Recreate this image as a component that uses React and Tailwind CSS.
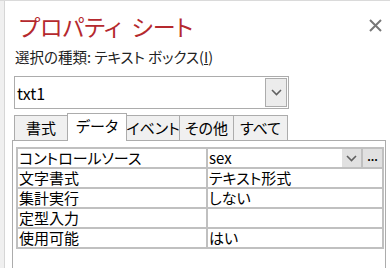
import React from 'react';

const jp = "font-['Noto_Sans_CJK_JP',sans-serif] [font-feature-settings:'palt']";

function Chevron({ className }) {
    return (
        <svg width="11" height="7" viewBox="0 0 11 7" className={className}>
            <path d="M1 1 L5.5 5.5 L10 1" fill="none" stroke="#606060" strokeWidth="1.6" />
        </svg>
    );
}

export default function App() {
    // property rows - static for now
    const rows = [
        { label: 'コントロールソース', value: 'sex', combo: true },
        { label: '文字書式', value: 'テキスト形式' },
        { label: '集計実行', value: 'しない' },
        { label: '定型入力', value: '' },
        { label: '使用可能', value: 'はい' },
    ];
    const tabs = [
        { name: '書式', w: 'w-[54px]' },
        { name: 'データ', w: 'w-[60px]' },
        { name: 'イベント', w: 'w-[54px]' },
        { name: 'その他', w: 'w-[55px]' },
        { name: 'すべて', w: 'w-[55px]' },
    ];

    return (
        <div className={`w-[390px] h-[268px] overflow-hidden flex bg-white border-t border-[#dadada] ${jp}`}>
            {/* left edge strip */}
            <div className="w-[5px] bg-[#f0f0f0] border-r border-[#d6d6d6] shrink-0" />
            <div className="flex-1 flex flex-col pl-[7px]">
                {/* header */}
                <div className="flex items-start justify-between pr-[8px]">
                    <h1 className="ml-[7px] mt-[13px] text-[23px] leading-[24px] text-[#b5292e] whitespace-nowrap">
                        プロパティ<span className="inline-block w-[10px]" />シート
                    </h1>
                    <svg width="13" height="13" viewBox="0 0 13 13" className="mt-[18px]">
                        <path d="M1 1 L12 12 M12 1 L1 12" stroke="#777" strokeWidth="2" />
                    </svg>
                </div>
                <div className="ml-[3px] mt-[10px] text-[14.5px] leading-[18px] text-[#222]">
                    選択の種類: テキスト ボックス(<span className="underline">I</span>)
                </div>
                {/* object selector */}
                <div className="ml-[2px] mt-[10px] w-[275px] h-[33px] border border-[#acacac] flex items-stretch">
                    <div className="flex-1 flex items-center pl-[2px] text-[16px] text-black">txt1</div>
                    <div className="w-[22px] m-px border border-[#acacac] bg-[#ececec] flex items-center justify-center">
                        <Chevron />
                    </div>
                </div>
                {/* tabs */}
                <div className="ml-[2px] mt-[4px] flex items-end h-[27px]">
                    {tabs.map((t, i) => (
                        <div
                            key={t.name}
                            className={
                                i === 1
                                    ? `relative z-10 -ml-px h-[28px] ${t.w} border border-b-0 border-[#acacac] bg-white flex items-center justify-center text-[15px] -mb-px pb-[2px] whitespace-nowrap`
                                    : `${i === 0 ? '' : '-ml-px'} h-[25px] ${t.w} border border-b-0 border-[#acacac] bg-[#f0f0f0] flex items-center justify-center text-[15px] whitespace-nowrap`
                            }
                        >
                            {t.name}
                        </div>
                    ))}
                </div>
                {/* property panel */}
                <div className="flex-1 mr-[4px] border border-b-0 border-[#acacac] pt-[6px] pl-[3px] pr-[1px]">
                    <div className="grid grid-cols-[188px_1fr] gap-[2px] p-[2px] bg-[#c0c0c0] text-[15px] leading-[18px] text-black">
                        {rows.map((r) => (
                            <React.Fragment key={r.label}>
                                <div className="bg-white h-[18px] pl-[1px] whitespace-nowrap">{r.label}</div>
                                <div className="bg-white h-[18px] pl-[1px] flex">
                                    <span className="flex-1">{r.value}</span>
                                    {r.combo && (
                                        <>
                                            <div className="w-[19px] bg-[#e1e1e1] flex items-center justify-center">
                                                <Chevron />
                                            </div>
                                            <div className="w-[2px] bg-[#c0c0c0]" />
                                            <div className="w-[19px] bg-[#e1e1e1] flex items-center justify-center text-[11px] font-bold leading-none pb-[3px]">
                                                ...
                                            </div>
                                        </>
                                    )}
                                </div>
                            </React.Fragment>
                        ))}
                    </div>
                </div>
            </div>
        </div>
    );
}
